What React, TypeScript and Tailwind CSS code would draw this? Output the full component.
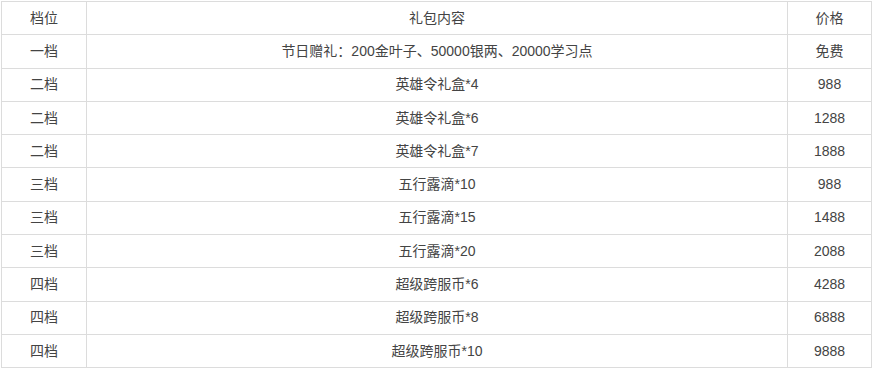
import React from "react";

const rows: [string, string, string][] = [
  ["一档", "节日赠礼：200金叶子、50000银两、20000学习点", "免费"],
  ["二档", "英雄令礼盒*4", "988"],
  ["二档", "英雄令礼盒*6", "1288"],
  ["二档", "英雄令礼盒*7", "1888"],
  ["三档", "五行露滴*10", "988"],
  ["三档", "五行露滴*15", "1488"],
  ["三档", "五行露滴*20", "2088"],
  ["四档", "超级跨服币*6", "4288"],
  ["四档", "超级跨服币*8", "6888"],
  ["四档", "超级跨服币*10", "9888"],
];

export default function App() {
  return (
    <div
      className="bg-white pl-[1px] pt-[1px] w-[875px] h-[369px] overflow-hidden"
      style={{ fontFamily: '"Liberation Sans", "Noto Sans CJK SC", sans-serif' }}
    >
      <table className="border-collapse w-[870px] table-fixed text-[14px] text-[#444]">
        <colgroup>
          <col className="w-[85px]" />
          <col className="w-[701px]" />
          <col className="w-[84px]" />
        </colgroup>
        <tbody>
          <tr className="h-[33.3px]">
            <td className="border border-[#dcdcdc] text-center p-0">档位</td>
            <td className="border border-[#dcdcdc] text-center p-0">礼包内容</td>
            <td className="border border-[#dcdcdc] text-center p-0">价格</td>
          </tr>
          {rows.map((r, i) => (
            <tr key={i} className="h-[33.3px]">
              <td className="border border-[#dcdcdc] text-center p-0">{r[0]}</td>
              <td className="border border-[#dcdcdc] text-center p-0">{r[1]}</td>
              <td className="border border-[#dcdcdc] text-center p-0">{r[2]}</td>
            </tr>
          ))}
        </tbody>
      </table>
    </div>
  );
}
